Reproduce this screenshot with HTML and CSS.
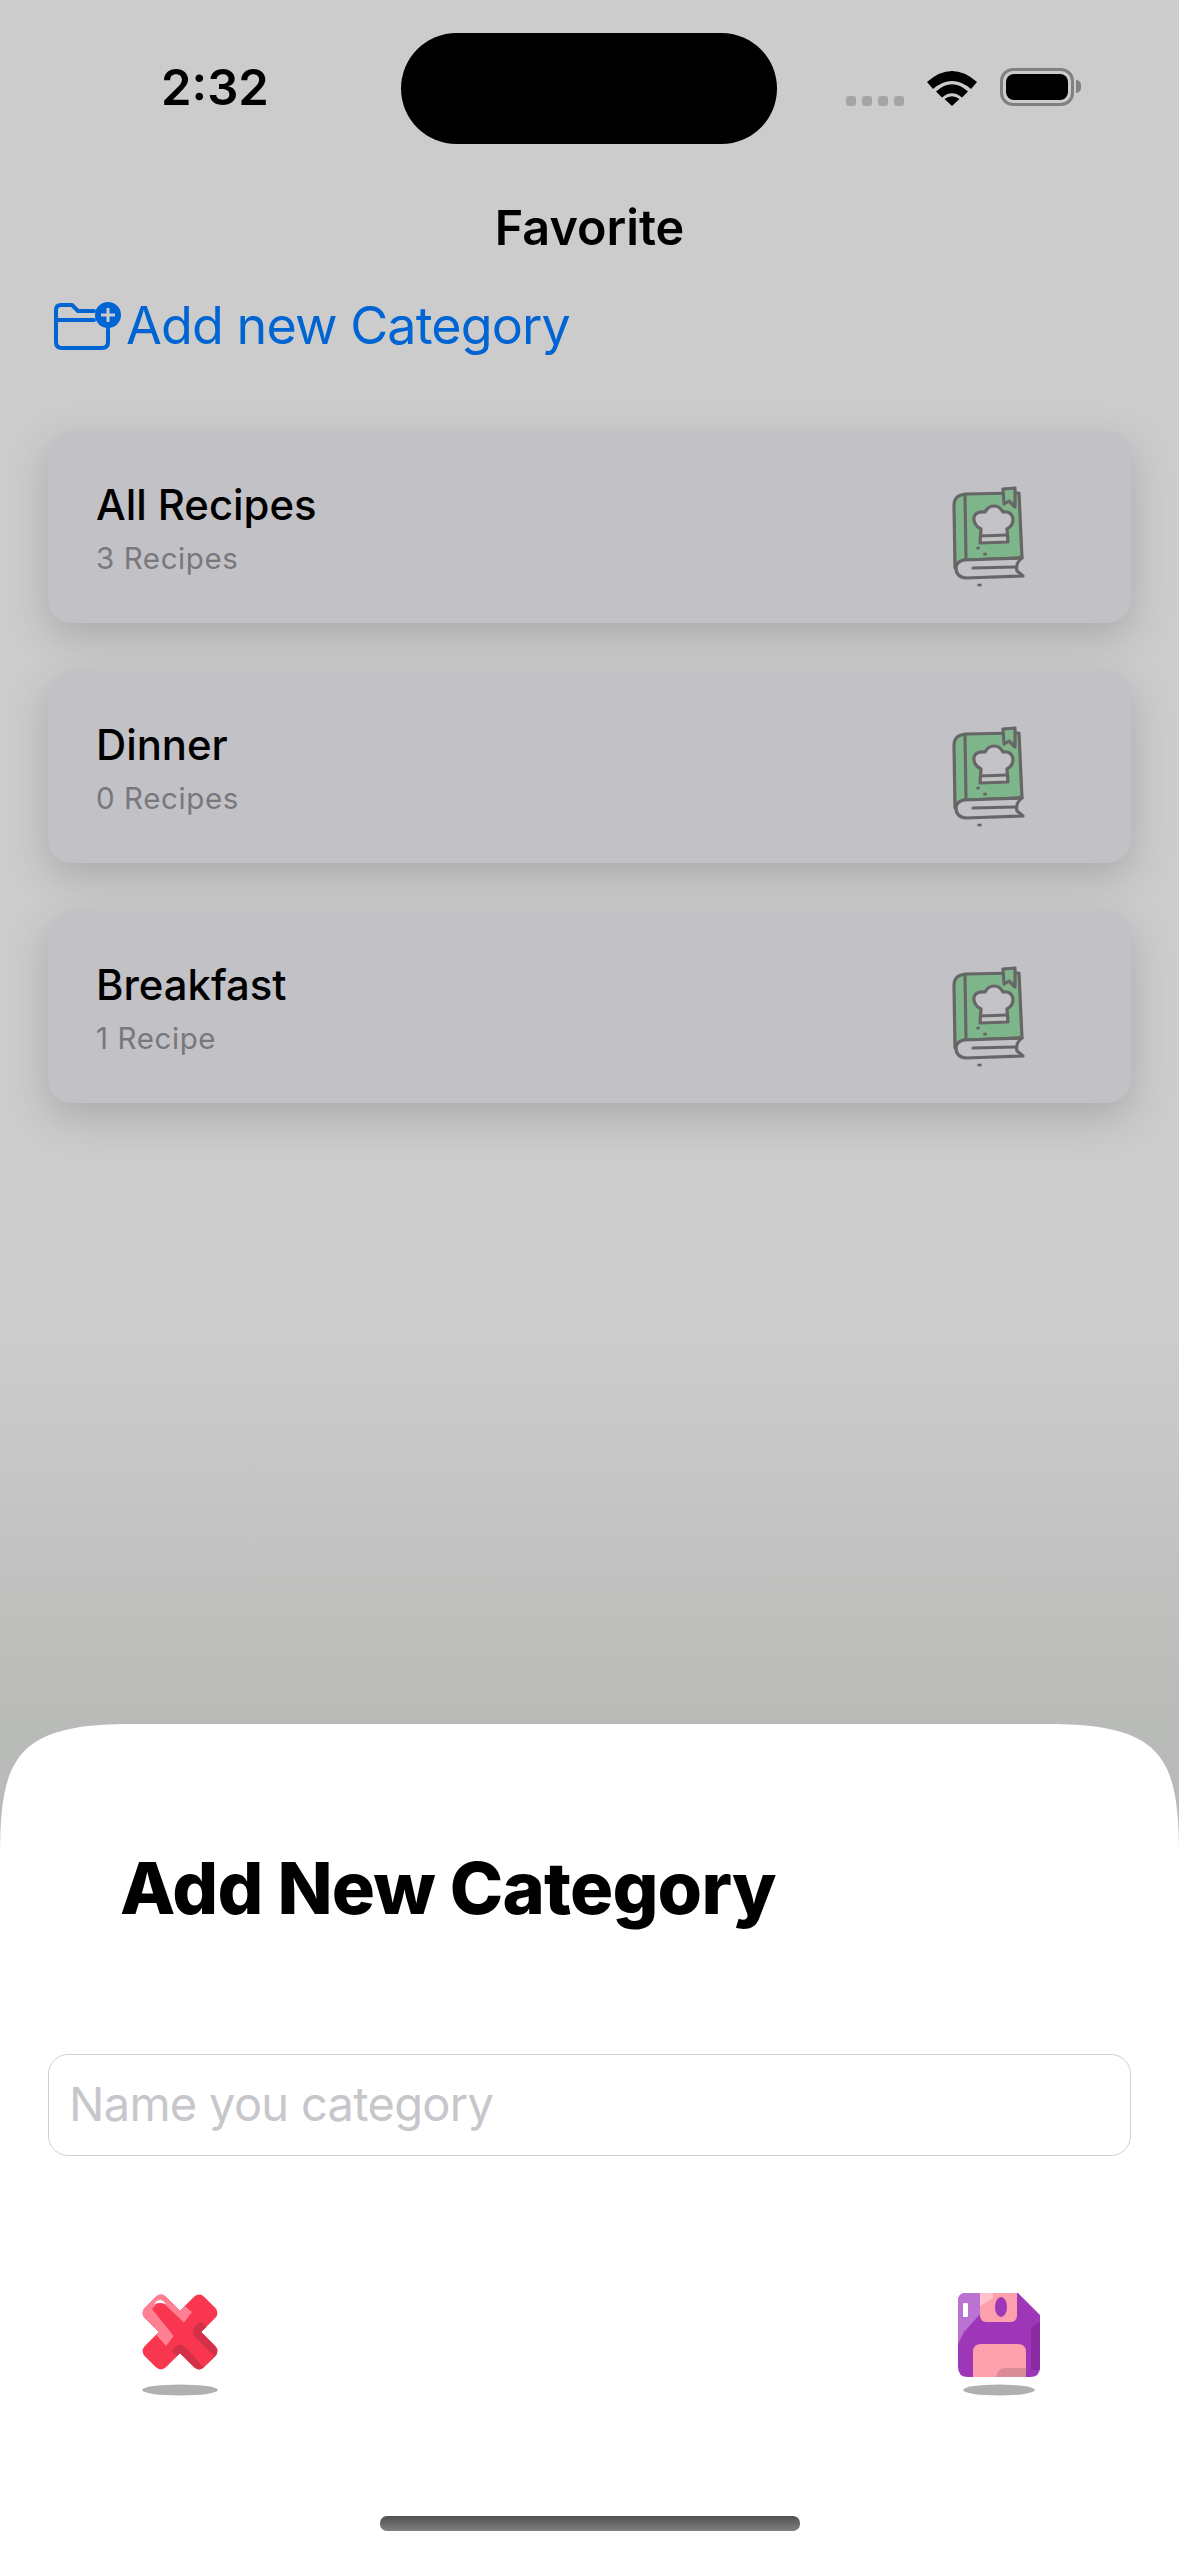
FILE: index.html
```html
<!DOCTYPE html>
<html lang="en">
<head>
  <meta charset="UTF-8">
  <meta name="viewport" content="width=device-width, initial-scale=1.0">
  <title>Favorite</title>
  <link rel="stylesheet" href="styles.css">
</head>
<body>
  <svg class="defs" width="0" height="0">
    <symbol id="book" viewBox="50 44 80 104">
      <path d="M66 53 L119 52 L122 117 L64 119 Q56 121 55 127 L54 64 Q54 54 66 53Z" fill="#7fb58a" stroke="#666" stroke-width="3.2" stroke-linejoin="round"/>
      <path d="M122 117 L64 119 Q56 121 56 127 Q56 136 66 137 L123 135 L117 130 Q115 122 122 117Z" fill="#c3c2c6" stroke="#666" stroke-width="3.2" stroke-linejoin="round"/>
      <path d="M65 54 L66 118 M73 127 L115 126" fill="none" stroke="#666" stroke-width="3.2" stroke-linecap="round"/>
      <path d="M103 48 L115 47 L115 66 L109 60 L104 63Z" fill="#7fb58a" stroke="#666" stroke-width="3.2" stroke-linejoin="round"/>
      <path d="M81 88 Q73 84 74 76 Q76 70 85 71 Q88 65 94 65 Q100 65 103 71 Q112 70 113 78 Q113 85 107 88 L108 101 L80 102Z" fill="#c3c2c6" stroke="#666" stroke-width="3.2" stroke-linejoin="round"/>
      <path d="M80 95 L107 94" fill="none" stroke="#666" stroke-width="3"/>
      <ellipse cx="78" cy="107" rx="2" ry="1.600" fill="#666"/>
      <ellipse cx="85" cy="113" rx="2" ry="1.600" fill="#666"/>
      <ellipse cx="79.500" cy="144" rx="2.400" ry="1.600" fill="#666"/>
    </symbol>
  </svg>

  <div class="status-bar">
    <span class="time">2:32</span>
    <div class="island"></div>
    <div class="status-icons">
      <div class="signal"><i></i><i></i><i></i><i></i></div>
      <svg class="wifi" width="52" height="38" viewBox="0 0 52 38">
        <path d="M1 14 Q26 -8 51 14 L45 21 Q26 5 7 21Z" fill="#000"/>
        <path d="M10 23.500 Q26 9 42 23.500 L36 29.500 Q26 21 16 29.500Z" fill="#000"/>
        <path d="M18.500 31 Q26 25.500 33.500 31 L26 38Z" fill="#000"/>
      </svg>
      <div class="battery"><div class="battery-level"></div></div>
      <div class="battery-tip"></div>
    </div>
  </div>

  <h1 class="page-title">Favorite</h1>

  <div class="add-category">
    <svg width="58" height="52" viewBox="0 0 58 52">
      <path d="M40 12 L24 12 L18 6 L7 6 Q2 6 2 11 L2 43 Q2 49 8 49 L48 49 Q54 49 54 43 L54 30 M2 21 L40 21" fill="none" stroke="#0064d2" stroke-width="4" stroke-linecap="round" stroke-linejoin="round"/>
      <circle cx="54" cy="16" r="13" fill="#0064d2"/>
      <path d="M54 9 L54 23 M47 16 L61 16" stroke="#ccc" stroke-width="3"/>
    </svg>
    <span>Add new Category</span>
  </div>

  <div class="category-list">
    <div class="category-card">
      <div>
        <div class="category-name">All Recipes</div>
        <div class="category-count">3 Recipes</div>
      </div>
      <svg class="book-icon"><use href="#book"/></svg>
    </div>
    <div class="category-card">
      <div>
        <div class="category-name">Dinner</div>
        <div class="category-count">0 Recipes</div>
      </div>
      <svg class="book-icon"><use href="#book"/></svg>
    </div>
    <div class="category-card">
      <div>
        <div class="category-name">Breakfast</div>
        <div class="category-count">1 Recipe</div>
      </div>
      <svg class="book-icon"><use href="#book"/></svg>
    </div>
  </div>

  <div class="sheet">
    <h2 class="sheet-title">Add New Category</h2>
    <div class="name-input">Name you category</div>
    <div class="sheet-actions">
      <svg class="action-icon" width="140" height="150" viewBox="0 0 140 150">
        <defs>
          <clipPath id="x-clip">
            <rect x="28" y="57" width="84" height="30" rx="7" transform="rotate(45 70 72)"/>
            <rect x="28" y="57" width="84" height="30" rx="7" transform="rotate(-45 70 72)"/>
          </clipPath>
        </defs>
        <g clip-path="url(#x-clip)">
          <rect x="20" y="20" width="100" height="100" fill="#f8364f"/>
          <path d="M25 50 L50 25 L82 52 L56 86Z" fill="#ff8093"/>
          <path d="M42 49 L50 40 L82 70 L70 84Z" fill="#f8364f"/>
          <path d="M62 92 Q68 80 76 88 L94 108 L104 96 L84 76 Q80 66 92 62 L116 88 L94 116Z" fill="#d3304a"/>
        </g>
        <path d="M44 44 Q50 36 56 44 Q50 42 44 44Z" fill="#fff"/>
        <ellipse cx="70" cy="130" rx="38" ry="5.500" fill="#b0b0b0"/>
      </svg>
      <svg class="action-icon" width="140" height="150" viewBox="0 0 140 150">
        <defs>
          <clipPath id="disk-clip">
            <path d="M36 33 L88 33 L110 55 L110 107 Q110 117 100 117 L38 117 Q28 117 28 107 L28 41 Q28 33 36 33Z"/>
          </clipPath>
        </defs>
        <g clip-path="url(#disk-clip)">
          <rect x="20" y="30" width="100" height="90" fill="#9e36b8"/>
          <path d="M28 33 L52 33 L52 52 L34 72 L28 84Z" fill="#bb73d3"/>
          <path d="M101 68 L110 62 L110 110 L101 110Z" fill="#8a2aa0"/>
          <rect x="50" y="28" width="37" height="34" rx="6" fill="#fd9fad"/>
          <path d="M50 33 L63 33 L63 38 L50 46Z" fill="#ffc2cb"/>
          <ellipse cx="71" cy="47" rx="6" ry="10" fill="#9e36b8"/>
          <path d="M43 120 L43 92 Q43 84 51 84 L88 84 Q96 84 96 92 L96 120Z" fill="#fd9fad"/>
          <path d="M66 120 Q66 108 76 108 L96 108 L96 120Z" fill="#d98c97"/>
        </g>
        <rect x="33" y="43" width="5" height="14" rx="1" fill="#fff"/>
        <ellipse cx="69" cy="130" rx="36" ry="5.500" fill="#b0b0b0"/>
      </svg>
    </div>
    <div class="home-indicator"></div>
  </div>
</body>
</html>
```

FILE: styles.css
```css
* {
  box-sizing: border-box;
}

body {
  margin: 0;
  width: 1179px;
  height: 2556px;
  overflow: hidden;
  position: relative;
  display: flex;
  flex-direction: column;
  font-family: Inter, 'Noto Sans', sans-serif;
  color: #000;
  background: linear-gradient(to bottom, #cccccc 0, #cccccc 1340px, #b9bbb8 1724px);
}

.defs {
  position: absolute;
}

.status-bar {
  height: 144px;
  padding: 0 98px 0 161px;
  display: flex;
  justify-content: space-between;
  align-items: flex-start;
}

.time {
  margin-top: 57px;
  font-size: 49px;
  line-height: 62px;
  font-weight: 600;
}

.island {
  position: absolute;
  top: 33px;
  left: 401px;
  width: 376px;
  height: 111px;
  background-color: #000;
  border-radius: 56px;
}

.status-icons {
  display: flex;
  align-items: flex-start;
  padding-top: 68px;
}

.signal {
  display: flex;
  gap: 6px;
  margin-top: 28px;
  margin-right: 22px;
}

.signal i {
  width: 10px;
  height: 10px;
  border-radius: 3px;
  background-color: #a5a5a5;
}

.wifi {
  margin-right: 22px;
}

.battery {
  width: 74px;
  height: 38px;
  padding: 3px;
  border: 3px solid #808080;
  border-radius: 13px;
}

.battery-level {
  width: 100%;
  height: 100%;
  background-color: #000;
  border-radius: 8px;
}

.battery-tip {
  width: 5px;
  height: 13px;
  margin-top: 12px;
  margin-left: 2px;
  background-color: #808080;
  border-radius: 0 6px 6px 0;
}

.page-title {
  margin: 51px 0 0;
  text-align: center;
  font-size: 48.500px;
  line-height: 66px;
  font-weight: 600;
}

.add-category {
  display: flex;
  align-items: center;
  height: 70px;
  margin-top: 29px;
  padding-left: 54px;
  color: #0064d2;
  font-size: 52px;
  letter-spacing: -0.9px;
}

.add-category svg {
  flex-shrink: 0;
  overflow: visible;
  margin-right: 14px;
}

.category-list {
  display: flex;
  flex-direction: column;
  gap: 48px;
  margin: 71px 48px 0;
}

.category-card {
  height: 192px;
  padding: 0 101px 0 48px;
  display: flex;
  justify-content: space-between;
  align-items: center;
  background-color: #c2c1c6;
  border-radius: 24px;
  box-shadow: 0 14px 40px rgba(0, 0, 0, 0.17);
}

.category-name {
  font-size: 41.800px;
  line-height: 54px;
  font-weight: 450;
}

.category-count {
  margin-top: 7px;
  font-size: 29.500px;
  line-height: 38px;
  color: #78787c;
  letter-spacing: 0.6px;
}

.book-icon {
  width: 80px;
  height: 104px;
  margin-top: 20px;
}

.sheet {
  position: absolute;
  left: 0;
  bottom: 0;
  width: 100%;
  height: 832px;
  display: flex;
  flex-direction: column;
  background-color: #fff;
  clip-path: path('M0 133 C0 35 15 0 130 0 L1049 0 C1164 0 1179 35 1179 133 L1179 832 L0 832 Z');
}

.sheet-title {
  margin: 118px 0 0 120px;
  font-size: 72px;
  line-height: 92px;
  font-weight: 800;
  letter-spacing: -0.800px;
}

.name-input {
  height: 102px;
  margin: 120px 48px 0;
  padding: 0 0 3px 20px;
  display: flex;
  align-items: center;
  font-size: 47px;
  letter-spacing: -0.7px;
  color: #c7c7cb;
  border: 1.500px solid #cfcfcf;
  border-radius: 20px;
}

.sheet-actions {
  display: flex;
  justify-content: space-between;
  margin-top: 104px;
  padding: 0 109px 0 110px;
}

.action-icon {
  filter: blur(0.6px);
}

.home-indicator {
  position: absolute;
  left: 380px;
  bottom: 25px;
  width: 420px;
  height: 15px;
  background: linear-gradient(to bottom, #505050, #808080);
  border-radius: 7px;
}
```
